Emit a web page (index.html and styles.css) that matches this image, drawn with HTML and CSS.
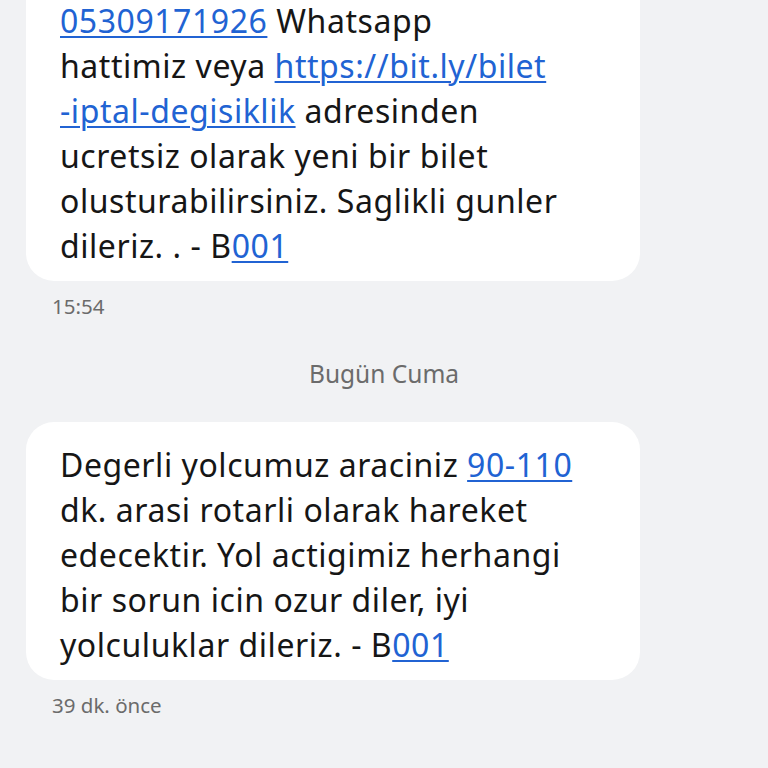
FILE: index.html
```html
<!doctype html>
<html>

<head>
    <title>Mesajlar</title>
    <link rel="stylesheet" href="styles.css">
</head>

<body>
    <div class="thread">
        <div class="msg">
            <div class="bubble first">
                <a href="#">05309171926</a> Whatsapp<br>
                hattimiz veya <a href="#">https://bit.ly/bilet</a><br>
                <a href="#">-iptal-degisiklik</a> adresinden<br>
                ucretsiz olarak yeni bir bilet<br>
                olusturabilirsiniz. Saglikli gunler<br>
                dileriz. . - B<a href="#">001</a>
            </div>
            <div class="time">15:54</div>
        </div>

        <div class="day">Bugün Cuma</div>

        <div class="msg">
            <div class="bubble">
                Degerli yolcumuz araciniz <a href="#">90-110</a><br>
                dk. arasi rotarli olarak hareket<br>
                edecektir. Yol actigimiz herhangi<br>
                bir sorun icin ozur diler, iyi<br>
                yolculuklar dileriz. - B<a href="#">001</a>
            </div>
            <div class="time">39 dk. önce</div>
        </div>
    </div>
</body>

</html>
```

FILE: styles.css
```css
* {
    margin: 0;
    padding: 0;
    box-sizing: border-box;
}

body {
    background-color: #f1f2f4;
    font-family: "Noto Sans", sans-serif;
    color: #161616;
    overflow: hidden;
}

.thread {
    display: flex;
    flex-direction: column;
    padding: 0 128px 0 26px;
}

.msg {
    display: flex;
    flex-direction: column;
}

.bubble {
    background-color: #ffffff;
    border-radius: 28px;
    padding: 20px 34px 13px 34px;
    font-size: 32px;
    line-height: 45px;
    letter-spacing: 0.55px;
}

.bubble.first {
    margin-top: -22px;
    border-top-left-radius: 0;
    border-top-right-radius: 0;
}

.bubble a {
    color: #2163d3;
    text-decoration: underline;
    text-decoration-thickness: 2px;
    text-underline-offset: 3px;
}

.time {
    font-size: 20.5px;
    color: #6b6b6b;
    padding: 14px 0 0 26px;
    line-height: 22px;
}

.day {
    text-align: center;
    font-size: 24.5px;
    line-height: 28px;
    color: #6b6b6b;
    padding: 43px 0 34px 0;
    margin-left: 102px;
}
```
